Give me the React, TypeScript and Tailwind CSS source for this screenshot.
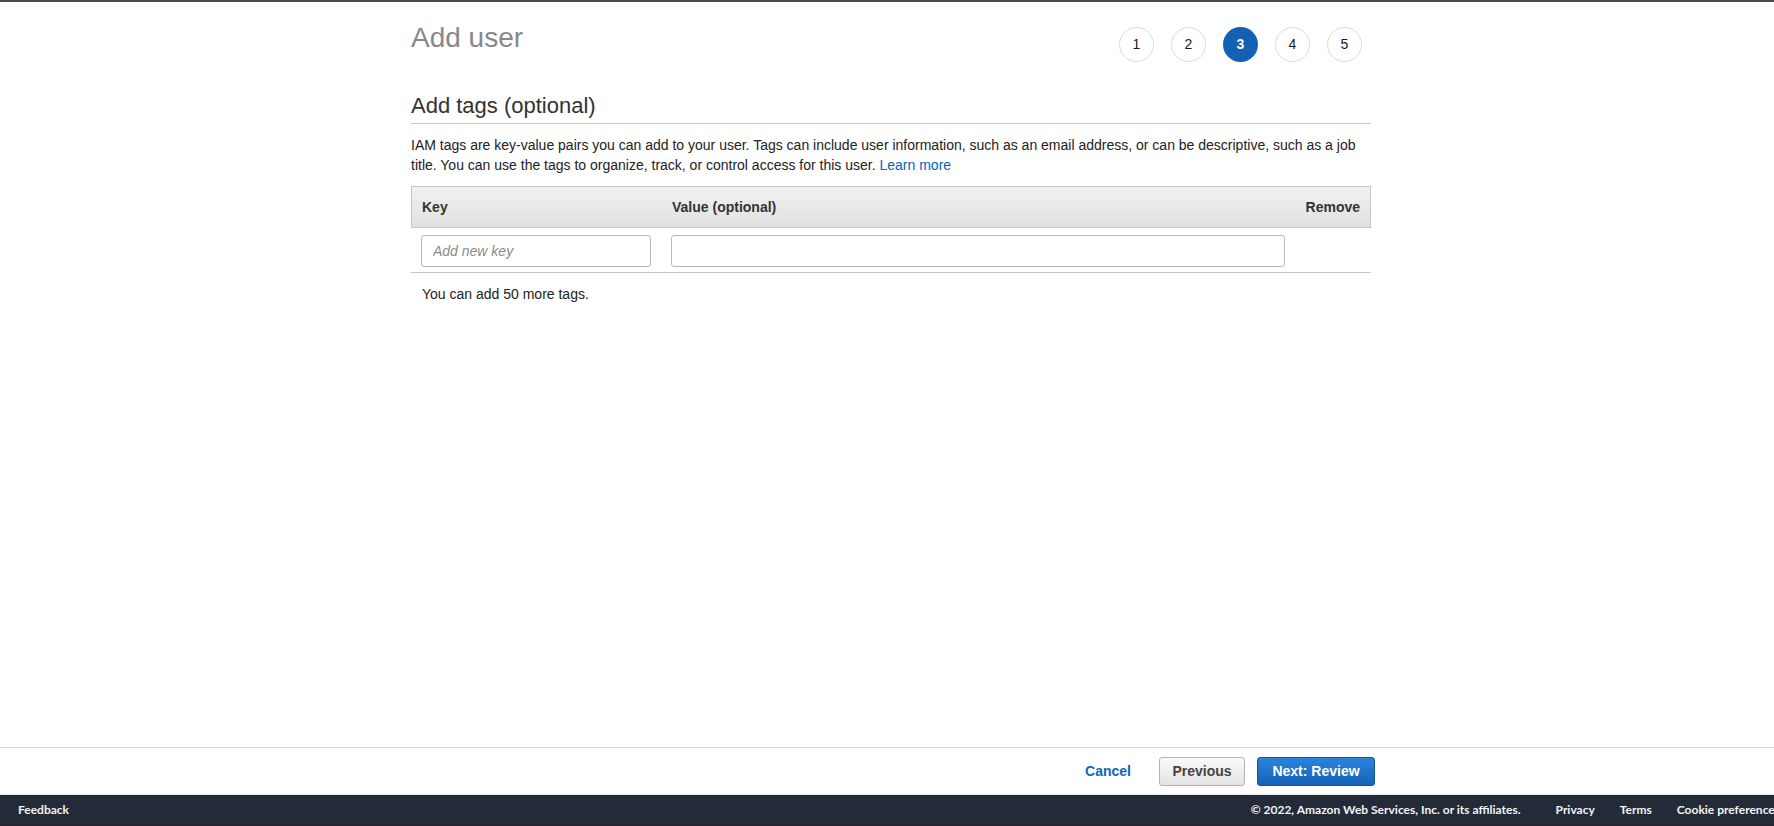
import React from 'react';

const steps = [1, 2, 3, 4, 5];
const current = 3;

const StepCircle: React.FC<{ n: number; active: boolean }> = ({ n, active }) => (
  <div
    className={
      active
        ? 'flex h-[35px] w-[35px] items-center justify-center rounded-full bg-[#1461b3] text-[14px] font-bold text-white'
        : 'flex h-[35px] w-[35px] items-center justify-center rounded-full border border-[#dcdcdc] bg-white text-[14px] text-[#16191f]'
    }
  >
    {n}
  </div>
);

const App: React.FC = () => {
  return (
    <div
      className="flex h-[826px] flex-col overflow-hidden bg-white text-[#222]"
      style={{ fontFamily: '"Liberation Sans", Arial, sans-serif' }}
    >
      <div className="h-[2px] bg-[#474d55]" />

      {/* main content */}
      <div className="flex flex-1 justify-center pl-2">
        <div className="w-[960px] pt-[17px]">
          <div className="flex items-start justify-between">
            <h1 className="mt-[3px] text-[28px] leading-[32px] font-normal text-[#888]">Add user</h1>
            <div className="mt-[8px] mr-[9px] flex gap-[17px]">
              {steps.map((s) => (
                <StepCircle key={s} n={s} active={s === current} />
              ))}
            </div>
          </div>

          <h2 className="mt-[31px] border-b border-[#c8c8c8] pb-[4px] text-[22px] leading-[26px] font-normal text-[#333]">
            Add tags (optional)
          </h2>

          <p className="mt-[11px] text-[14px] leading-[20px] text-[#222]">
            IAM tags are key-value pairs you can add to your user. Tags can include user information, such as an email
            address, or can be descriptive, such as a job title. You can use the tags to organize, track, or control
            access for this user. <a className="text-[#0066c0]">Learn more</a>
          </p>

          <div className="mt-[11px]">
            <div className="grid h-[42px] grid-cols-[250px_1fr_76px] items-center border border-[#c6c6c6] bg-gradient-to-b from-[#f1f1f1] to-[#e1e1e1] text-[14px] font-bold text-[#333]">
              <div className="pl-[10px]">Key</div>
              <div className="pl-[10px]">Value (optional)</div>
              <div className="pr-[10px] text-right">Remove</div>
            </div>
            <div className="grid grid-cols-[250px_1fr_76px] border-b border-[#c8c8c8] pt-[7px] pb-[5px]">
              <div className="px-[10px]">
                <input
                  className="h-[32px] w-full rounded-[3px] border border-[#b9b9b9] px-[11px] text-[14px] italic outline-none placeholder:text-[#8a8a8a]"
                  placeholder="Add new key"
                />
              </div>
              <div className="px-[10px]">
                <input className="h-[32px] w-full rounded-[3px] border border-[#b9b9b9] px-[11px] text-[14px] outline-none" />
              </div>
              <div />
            </div>
            <p className="mt-[11px] pl-[11px] text-[14px] leading-[20px] text-[#222]">You can add 50 more tags.</p>
          </div>
        </div>
      </div>

      {/* wizard actions */}
      <div className="flex h-[48px] items-center justify-end border-t border-b border-t-[#dcdcdc] border-b-[#e6e6e6] pr-[399px]">
        <button className="mr-[28px] text-[14px] font-bold text-[#0f66bd]">Cancel</button>
        <button className="mr-[12px] h-[29px] w-[86px] rounded-[3px] border border-[#b5b5b5] bg-gradient-to-b from-[#fafafa] to-[#e3e3e3] text-[14px] font-bold text-[#444]">
          Previous
        </button>
        <button className="h-[29px] w-[118px] rounded-[3px] border border-[#15529a] bg-gradient-to-b from-[#2c83db] to-[#1562b8] text-[14px] font-bold text-white">
          Next: Review
        </button>
      </div>

      {/* console footer */}
      <div
        className="flex h-[31px] items-center whitespace-nowrap border-b border-[#3b1a2c] bg-[#222b37] text-[12px] font-bold text-[#f2f3f3]"
        style={{ fontFamily: 'Lato, "Open Sans", sans-serif' }}
      >
        <span className="pl-[18px]">Feedback</span>
        <div className="mr-[-6px] ml-auto flex items-center">
          <span>© 2022, Amazon Web Services, Inc. or its affiliates.</span>
          <span className="ml-[35px]">Privacy</span>
          <span className="ml-[25px]">Terms</span>
          <span className="ml-[25px]">Cookie preferences</span>
        </div>
      </div>
    </div>
  );
};

export default App;
